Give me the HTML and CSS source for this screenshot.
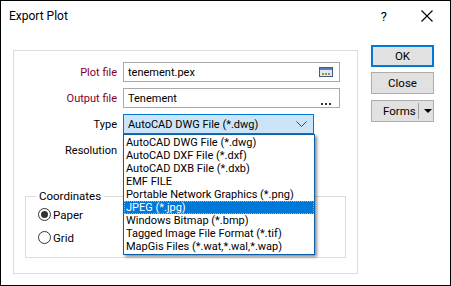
FILE: index.html
```
<!DOCTYPE html>
<html lang="en">
<head>
    <meta charset="UTF-8">
    <title>Export Plot</title>
    <link rel="stylesheet" href="styles.css">
</head>
<body>

<div class="window">
    <div class="titlebar">
        <span class="title">Export Plot</span>
        <span class="help">?</span>
        <svg class="close-x" width="12" height="12" viewBox="0 0 12 12">
            <path d="M0.5 0.5 L11.5 11.5 M11.5 0.5 L0.5 11.5" stroke="#000" stroke-width="1.1"/>
        </svg>
    </div>

    <div class="content">
        <div class="panel">
            <div class="row">
                <label class="required">Plot file</label>
                <div class="field">
                    <span class="value">tenement.pex</span>
                    <svg class="browse" width="14" height="10" viewBox="0 0 14 10">
                        <rect x="0.5" y="0.5" width="13" height="9" fill="#dfe9f5" stroke="#3c5a8a"/>
                        <rect x="1" y="1" width="12" height="2" fill="#5d7fb5"/>
                        <rect x="3" y="6" width="2" height="2" fill="#b8862e"/>
                        <rect x="6" y="6" width="2" height="2" fill="#b8862e"/>
                        <rect x="9" y="6" width="2" height="2" fill="#b8862e"/>
                    </svg>
                </div>
            </div>
            <div class="row">
                <label class="required">Output file</label>
                <div class="field">
                    <span class="value">Tenement</span>
                    <span class="dots"><i></i><i></i><i></i></span>
                </div>
            </div>
            <div class="row">
                <label>Type</label>
                <div class="combo-wrap">
                    <div class="combo">
                        <span class="value">AutoCAD DWG File (*.dwg)</span>
                        <svg class="chevron" width="11" height="6" viewBox="0 0 11 6">
                            <polyline points="0.5,0.5 5.5,5.5 10.5,0.5" fill="none" stroke="#444" stroke-width="1"/>
                        </svg>
                    </div>
                    <ul class="dropdown">
                        <li>AutoCAD DWG File (*.dwg)</li>
                        <li>AutoCAD DXF File (*.dxf)</li>
                        <li>AutoCAD DXB File (*.dxb)</li>
                        <li>EMF FILE</li>
                        <li>Portable Network Graphics (*.png)</li>
                        <li class="selected">JPEG (*.jpg)</li>
                        <li>Windows Bitmap (*.bmp)</li>
                        <li>Tagged Image File Format (*.tif)</li>
                        <li>MapGis Files (*.wat,*.wal,*.wap)</li>
                    </ul>
                </div>
            </div>
            <div class="row">
                <label>Resolution</label>
            </div>

            <fieldset class="group">
                <legend>Coordinates</legend>
                <div class="radio-row">
                    <span class="radio checked"></span>
                    <span>Paper</span>
                </div>
                <div class="radio-row">
                    <span class="radio"></span>
                    <span>Grid</span>
                </div>
            </fieldset>
        </div>

        <div class="buttons">
            <button class="btn default">OK</button>
            <button class="btn">Close</button>
            <button class="btn split">
                <span class="split-label">Forms</span>
                <span class="split-sep"></span>
                <span class="split-arrow"></span>
            </button>
        </div>
    </div>
</div>

</body>
</html>
```

FILE: styles.css
```
* {
    margin: 0;
    padding: 0;
    box-sizing: border-box;
}

body {
    font-family: 'Roboto', 'Noto Sans', sans-serif;
    font-size: 11px;
    color: #000;
    background: #fff;
}

.window {
    width: 451px;
    height: 286px;
    border: 1px solid #000;
    background: #fff;
}

.titlebar {
    height: 30px;
    display: flex;
    align-items: center;
    padding-left: 8px;
}

.title {
    flex: 1;
    font-size: 12px;
}

.help {
    font-size: 13px;
    margin-right: 34px;
}

.close-x {
    margin-right: 17px;
}

.content {
    display: flex;
    align-items: flex-start;
    padding: 14px 0 0 12px;
}

.panel {
    width: 345px;
    height: 224px;
    margin-top: 5px;
    border: 1px solid #dcdcdc;
    padding-top: 11px;
}

.row {
    display: flex;
    align-items: center;
    height: 20px;
    margin-bottom: 6px;
}

.row label {
    width: 103px;
    margin-right: 6px;
    text-align: right;
    white-space: nowrap;
}

.row label.required {
    color: #800033;
}

.field {
    width: 217px;
    height: 20px;
    border: 1px solid #a9a9a9;
    display: flex;
    align-items: center;
    padding: 0 4px;
}

.value {
    flex: 1;
    white-space: nowrap;
}

.browse {
    margin-right: 2px;
}

.dots {
    display: flex;
    gap: 2px;
    align-self: flex-end;
    margin: 0 4px 2px 0;
}

.dots i {
    width: 2px;
    height: 2px;
    background: #333;
}

.combo-wrap {
    position: relative;
}

.combo {
    width: 191px;
    height: 20px;
    border: 1px solid #0078d7;
    background: #cce4f7;
    display: flex;
    align-items: center;
    padding: 0 3px 0 4px;
}

.chevron {
    margin-right: 3px;
}

.dropdown {
    position: absolute;
    top: 100%;
    left: 0;
    width: 192px;
    list-style: none;
    background: #fff;
    border: 1px solid #0b5fa8;
    padding: 1px 0;
    box-shadow: 2px 2px 3px rgba(0, 0, 0, 0.45);
    z-index: 2;
}

.dropdown li {
    height: 13px;
    line-height: 13px;
    padding-left: 2px;
    white-space: nowrap;
    overflow: hidden;
}

.dropdown li.selected {
    background: #0078d7;
    color: #fff;
    outline: 1px dotted #f0a040;
    outline-offset: -1px;
}

.group {
    margin: 29px 11px 0 11px;
    height: 69px;
    border: 1px solid #dcdcdc;
    padding: 0 0 0 12px;
}

.group legend {
    margin-left: -2px;
    padding: 0 3px;
    font-size: 11.5px;
}

.radio-row {
    display: flex;
    align-items: center;
    gap: 2px;
    height: 23px;
    font-size: 11.5px;
}

.radio {
    width: 13px;
    height: 13px;
    border: 1px solid #333;
    border-radius: 50%;
    position: relative;
}

.radio.checked::after {
    content: "";
    position: absolute;
    left: 2px;
    top: 2px;
    width: 7px;
    height: 7px;
    border-radius: 50%;
    background: #333;
}

.buttons {
    margin-left: 13px;
    display: flex;
    flex-direction: column;
}

.btn {
    width: 63px;
    height: 22px;
    font-family: inherit;
    font-size: 11.5px;
    background: #e1e1e1;
    border: 1px solid #adadad;
    margin-bottom: 6px;
}

.btn.default {
    border: 2px solid #0078d7;
    margin-bottom: 5px;
}

.btn.split {
    display: flex;
    align-items: center;
    padding-left: 11px;
}

.split-label {
    width: 35px;
    text-align: left;
}

.split-sep {
    width: 1px;
    height: 16px;
    background: #a0a0a0;
}

.split-arrow {
    margin-left: 5px;
    width: 0;
    height: 0;
    border-left: 4px solid transparent;
    border-right: 4px solid transparent;
    border-top: 4px solid #000;
}
```
